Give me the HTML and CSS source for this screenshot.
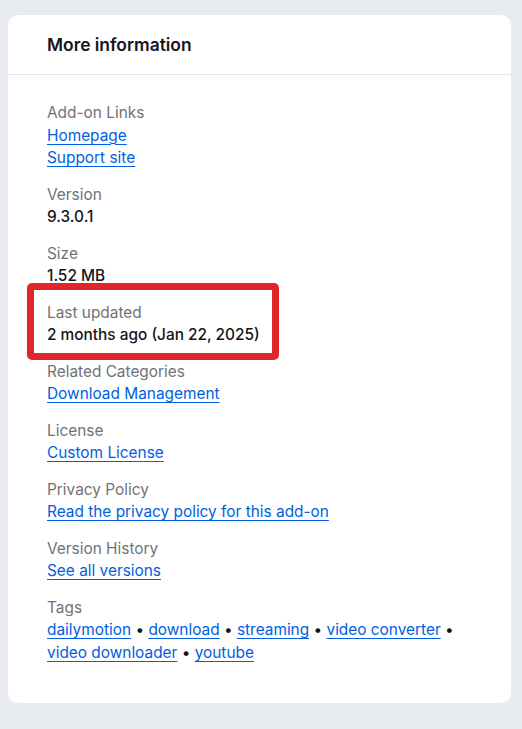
FILE: index.html
```html
<!DOCTYPE html>
<html lang="en">
<head>
<meta charset="utf-8">
<title>More information</title>
<link rel="stylesheet" href="styles.css">
</head>
<body>
<section class="card">
  <header class="card-header">
    <h2 class="card-title">More information</h2>
  </header>
  <dl class="info">
    <div class="item">
      <dt class="label">Add-on Links</dt>
      <dd class="value"><a href="#" class="link">Homepage</a></dd>
      <dd class="value"><a href="#" class="link">Support site</a></dd>
    </div>
    <div class="item">
      <dt class="label">Version</dt>
      <dd class="value">9.3.0.1</dd>
    </div>
    <div class="item">
      <dt class="label">Size</dt>
      <dd class="value">1.52 MB</dd>
    </div>
    <div class="item highlighted">
      <span class="highlight-box" aria-hidden="true"></span>
      <dt class="label">Last updated</dt>
      <dd class="value">2 months ago (Jan 22, 2025)</dd>
    </div>
    <div class="item">
      <dt class="label">Related Categories</dt>
      <dd class="value"><a href="#" class="link">Download Management</a></dd>
    </div>
    <div class="item">
      <dt class="label">License</dt>
      <dd class="value"><a href="#" class="link">Custom License</a></dd>
    </div>
    <div class="item">
      <dt class="label">Privacy Policy</dt>
      <dd class="value"><a href="#" class="link">Read the privacy policy for this add-on</a></dd>
    </div>
    <div class="item">
      <dt class="label">Version History</dt>
      <dd class="value"><a href="#" class="link">See all versions</a></dd>
    </div>
    <div class="item">
      <dt class="label">Tags</dt>
      <dd class="value tags"><a href="#" class="link">dailymotion</a> • <a href="#" class="link">download</a> • <a href="#" class="link">streaming</a> • <a href="#" class="link">video converter</a> • <a href="#" class="link">video downloader</a> • <a href="#" class="link">youtube</a></dd>
    </div>
  </dl>
</section>
</body>
</html>
```

FILE: styles.css
```css
* { box-sizing: border-box; }
html, body { margin: 0; padding: 0; }
body {
  background: #e8ebef;
  font-family: Inter, "Noto Sans", sans-serif;
  color: #15141a;
  padding: 15px 11px 27px 8px;
}
.card {
  background: #ffffff;
  border-radius: 10px;
  width: 503px;
}
.card-header {
  height: 60px;
  border-bottom: 1px solid #e7e8ea;
  padding: 0 39px;
  display: flex;
  align-items: center;
}
.card-title {
  margin: 0;
  font-size: 17.4px;
  font-weight: 600;
  line-height: 24px;
  color: #15141a;
}
.info {
  margin: 0;
  padding: 27px 39px 38px;
  display: flex;
  flex-direction: column;
  gap: 13.6px;
}
.item {
  position: relative;
}
.label, .value {
  margin: 0;
  font-size: 15.4px;
  line-height: 22.7px;
}
.label {
  color: #727276;
  font-weight: 400;
}
.value {
  color: #15141a;
  font-weight: 500;
}
.link {
  color: #0060df;
  font-weight: 400;
  text-decoration: underline;
  text-underline-offset: 3px;
  text-decoration-thickness: 1px;
}
.tags { font-weight: 400; }
.highlight-box {
  position: absolute;
  top: -19px;
  left: -20px;
  width: 252px;
  height: 77px;
  border: 7px solid #e0262b;
  border-radius: 5px;
  pointer-events: none;
}
```
